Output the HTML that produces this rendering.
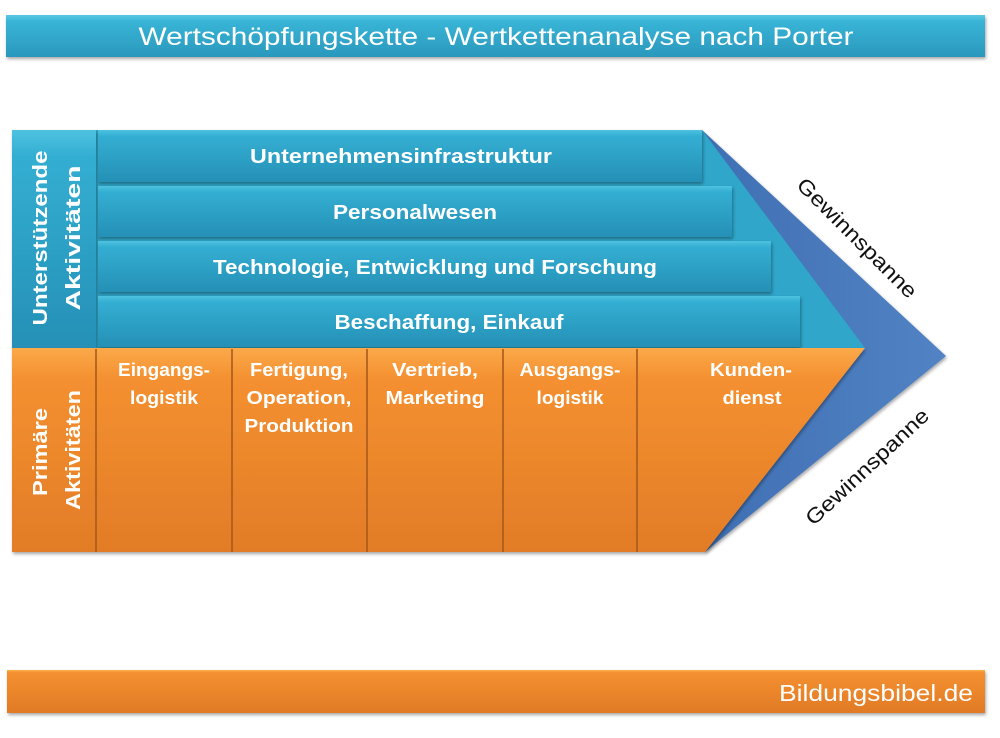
<!DOCTYPE html>
<html><head><meta charset="utf-8"><style>
html,body{margin:0;padding:0;background:#fff;}
svg{display:block;font-family:"Liberation Sans",sans-serif;}
</style></head><body>
<svg width="1000" height="738" viewBox="0 0 1000 738" xmlns="http://www.w3.org/2000/svg">
<defs>
<linearGradient id="cy" x1="0" y1="0" x2="0" y2="1">
<stop offset="0" stop-color="#5cc9e4"/><stop offset="0.15" stop-color="#38b4d6"/><stop offset="1" stop-color="#2a98bc"/></linearGradient>
<linearGradient id="cyb" x1="0" y1="0" x2="0" y2="1">
<stop offset="0" stop-color="#4ec2e0"/><stop offset="0.12" stop-color="#33aed2"/><stop offset="1" stop-color="#2690b6"/></linearGradient>
<linearGradient id="or" x1="0" y1="0" x2="0" y2="1">
<stop offset="0" stop-color="#fbb04a"/><stop offset="0.06" stop-color="#f49030"/><stop offset="1" stop-color="#e07a26"/></linearGradient>
<linearGradient id="orf" x1="0" y1="0" x2="0" y2="1">
<stop offset="0" stop-color="#fba94a"/><stop offset="0.15" stop-color="#f49030"/><stop offset="1" stop-color="#e27c27"/></linearGradient>
<linearGradient id="bl" x1="0" y1="0" x2="1" y2="0">
<stop offset="0" stop-color="#3f6fb3"/><stop offset="1" stop-color="#5283c4"/></linearGradient>
<filter id="sh" x="-5%" y="-5%" width="115%" height="130%"><feDropShadow dx="1" dy="2" stdDeviation="1.5" flood-color="#000" flood-opacity="0.35"/></filter>
</defs>
<rect x="6" y="15" width="979" height="42" fill="url(#cy)" filter="url(#sh)"/>
<text x="496" y="45" font-size="25" fill="#fff" text-anchor="middle" textLength="715" lengthAdjust="spacingAndGlyphs">Wertschöpfungskette - Wertkettenanalyse nach Porter</text>
<polygon points="702,130 946,356 705,552" fill="url(#bl)" filter="url(#sh)"/>
<polygon points="12,130 702,130 865,348 12,348" fill="#2fa6ca"/>
<rect x="12" y="130" width="84" height="218" fill="url(#cyb)" filter="url(#sh)"/>
<rect x="98" y="130" width="604" height="52" fill="url(#cyb)" filter="url(#sh)"/>
<rect x="98" y="186" width="634" height="51" fill="url(#cyb)" filter="url(#sh)"/>
<rect x="98" y="241" width="673" height="51" fill="url(#cyb)" filter="url(#sh)"/>
<rect x="98" y="296" width="702" height="51" fill="url(#cyb)" filter="url(#sh)"/>
<g fill="#fff" font-weight="bold" font-size="20" text-anchor="middle" lengthAdjust="spacingAndGlyphs">
<text x="401" y="163" textLength="302" lengthAdjust="spacingAndGlyphs">Unternehmensinfrastruktur</text>
<text x="415" y="219" textLength="164" lengthAdjust="spacingAndGlyphs">Personalwesen</text>
<text x="435" y="274" textLength="444" lengthAdjust="spacingAndGlyphs">Technologie, Entwicklung und Forschung</text>
<text x="449" y="329" textLength="229" lengthAdjust="spacingAndGlyphs">Beschaffung, Einkauf</text>
</g>
<polygon points="12,348 865,348 705,552 12,552" fill="url(#orf)" filter="url(#sh)"/>
<g fill="none" stroke="#a85a1a" stroke-width="2" opacity="0.8">
<line x1="96" y1="349" x2="96" y2="552"/>
<line x1="232" y1="349" x2="232" y2="552"/>
<line x1="367" y1="349" x2="367" y2="552"/>
<line x1="503" y1="349" x2="503" y2="552"/>
<line x1="637" y1="349" x2="637" y2="552"/>
</g>
<g fill="#fff" font-weight="bold" font-size="18" text-anchor="middle">
<text x="164" y="376" textLength="92" lengthAdjust="spacingAndGlyphs">Eingangs-</text><text x="164" y="404" textLength="68" lengthAdjust="spacingAndGlyphs">logistik</text>
<text x="299" y="376" textLength="98" lengthAdjust="spacingAndGlyphs">Fertigung,</text><text x="299" y="404" textLength="105" lengthAdjust="spacingAndGlyphs">Operation,</text><text x="299" y="432" textLength="109" lengthAdjust="spacingAndGlyphs">Produktion</text>
<text x="435" y="376" textLength="86" lengthAdjust="spacingAndGlyphs">Vertrieb,</text><text x="435" y="404" textLength="99" lengthAdjust="spacingAndGlyphs">Marketing</text>
<text x="570" y="376" textLength="101" lengthAdjust="spacingAndGlyphs">Ausgangs-</text><text x="570" y="404" textLength="67" lengthAdjust="spacingAndGlyphs">logistik</text>
<text x="751" y="376" textLength="82" lengthAdjust="spacingAndGlyphs">Kunden-</text><text x="752" y="404" textLength="59" lengthAdjust="spacingAndGlyphs">dienst</text>
</g>
<g fill="#fff" font-weight="bold" font-size="20" text-anchor="middle">
<text transform="translate(47,238) rotate(-90)" textLength="175" lengthAdjust="spacingAndGlyphs">Unterstützende</text>
<text transform="translate(80,238) rotate(-90)" textLength="145" lengthAdjust="spacingAndGlyphs">Aktivitäten</text>
<text transform="translate(47,452) rotate(-90)" textLength="88" lengthAdjust="spacingAndGlyphs">Primäre</text>
<text transform="translate(80,450) rotate(-90)" textLength="120" lengthAdjust="spacingAndGlyphs">Aktivitäten</text>
</g>
<g fill="#111" font-size="21" text-anchor="middle">
<text transform="translate(852,243) rotate(45)" textLength="160" lengthAdjust="spacingAndGlyphs">Gewinnspanne</text>
<text transform="translate(872,472) rotate(-43)" textLength="160" lengthAdjust="spacingAndGlyphs">Gewinnspanne</text>
</g>
<rect x="7" y="670" width="978" height="43" fill="url(#or)" filter="url(#sh)"/>
<text x="973" y="701" font-size="23" fill="#fff" text-anchor="end" textLength="194" lengthAdjust="spacingAndGlyphs">Bildungsbibel.de</text>
</svg>
</body></html>
